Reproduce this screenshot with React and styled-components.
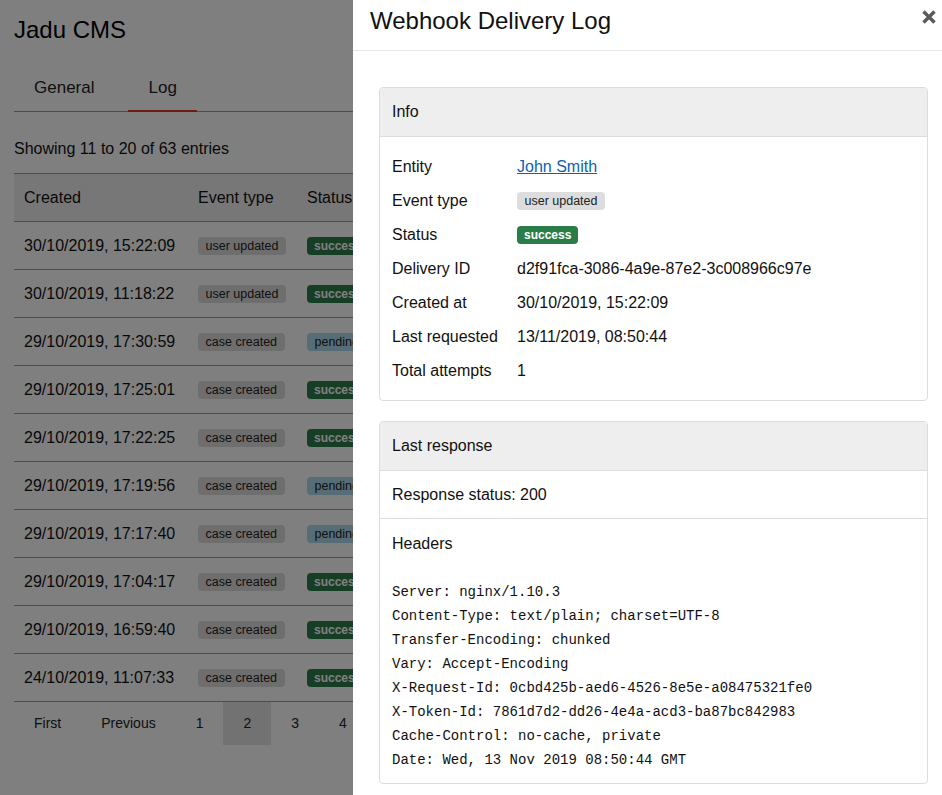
import React from "react";
import styled, { createGlobalStyle } from "styled-components";

const GlobalStyle = createGlobalStyle`
    body {
        margin: 0;
        background: #fff;
        font-family: "Liberation Sans", Arial, sans-serif;
        color: #111;
    }
`;

const rows = [
    { created: "30/10/2019, 15:22:09", event: "user updated", status: "success" },
    { created: "30/10/2019, 11:18:22", event: "user updated", status: "success" },
    { created: "29/10/2019, 17:30:59", event: "case created", status: "pending" },
    { created: "29/10/2019, 17:25:01", event: "case created", status: "success" },
    { created: "29/10/2019, 17:22:25", event: "case created", status: "success" },
    { created: "29/10/2019, 17:19:56", event: "case created", status: "pending" },
    { created: "29/10/2019, 17:17:40", event: "case created", status: "pending" },
    { created: "29/10/2019, 17:04:17", event: "case created", status: "success" },
    { created: "29/10/2019, 16:59:40", event: "case created", status: "success" },
    { created: "24/10/2019, 11:07:33", event: "case created", status: "success" },
];

const headers = `Server: nginx/1.10.3
Content-Type: text/plain; charset=UTF-8
Transfer-Encoding: chunked
Vary: Accept-Encoding
X-Request-Id: 0cbd425b-aed6-4526-8e5e-a08475321fe0
X-Token-Id: 7861d7d2-dd26-4e4a-acd3-ba87bc842983
Cache-Control: no-cache, private
Date: Wed, 13 Nov 2019 08:50:44 GMT`;

const pages = ["First", "Previous", "1", "2", "3", "4", "5", "6", "7", "Next", "Last"];

const App = () => {
    const info = [
        { label: "Entity", value: <LinkText href="#">John Smith</LinkText> },
        { label: "Event type", value: <Badge>user updated</Badge> },
        { label: "Status", value: <Badge $kind="success">success</Badge> },
        { label: "Delivery ID", value: "d2f91fca-3086-4a9e-87e2-3c008966c97e" },
        { label: "Created at", value: "30/10/2019, 15:22:09" },
        { label: "Last requested", value: "13/11/2019, 08:50:44" },
        { label: "Total attempts", value: "1" },
    ];

    return (
        <>
            <GlobalStyle />
            <Page>
                <Title>Jadu CMS</Title>
                <Tabs>
                    <Tab>General</Tab>
                    <Tab $active>Log</Tab>
                </Tabs>
                <Summary>Showing 11 to 20 of 63 entries</Summary>
                <Table>
                    <colgroup>
                        <col style={{ width: 174 }} />
                        <col style={{ width: 109 }} />
                        <col style={{ width: 120 }} />
                        <col style={{ width: 120 }} />
                        <col />
                    </colgroup>
                    <thead>
                        <tr>
                            <Th>Created</Th>
                            <Th>Event type</Th>
                            <Th>Status</Th>
                            <Th>Attempts</Th>
                            <Th />
                        </tr>
                    </thead>
                    <tbody>
                        {rows.map((r) => (
                            <tr key={r.created}>
                                <Td>{r.created}</Td>
                                <Td><Badge>{r.event}</Badge></Td>
                                <Td><Badge $kind={r.status}>{r.status}</Badge></Td>
                                <Td>1</Td>
                                <Td>View</Td>
                            </tr>
                        ))}
                    </tbody>
                </Table>
                <Pagination>
                    {pages.map((p) => (
                        <PageItem key={p} $active={p === "2"}>{p}</PageItem>
                    ))}
                </Pagination>
            </Page>
            <Backdrop />
            <Drawer>
                <DrawerHeader>
                    <DrawerTitle>Webhook Delivery Log</DrawerTitle>
                    <Close aria-label="Close">
                        <svg width="16" height="16" viewBox="0 0 16 16">
                            <path d="M2.5 2.5 L13.5 13.5 M13.5 2.5 L2.5 13.5" stroke="#5a5a5a" strokeWidth="3.4" />
                        </svg>
                    </Close>
                </DrawerHeader>
                <DrawerBody>
                    <Panel>
                        <PanelHeading>Info</PanelHeading>
                        <InfoGrid>
                            {info.map((i) => (
                                <React.Fragment key={i.label}>
                                    <InfoLabel>{i.label}</InfoLabel>
                                    <InfoValue>{i.value}</InfoValue>
                                </React.Fragment>
                            ))}
                        </InfoGrid>
                    </Panel>
                    <Panel>
                        <PanelHeading>Last response</PanelHeading>
                        <PanelSection>Response status: 200</PanelSection>
                        <PanelSection>
                            Headers
                            <Pre>{headers}</Pre>
                        </PanelSection>
                    </Panel>
                </DrawerBody>
            </Drawer>
        </>
    );
};

export default App;

const Page = styled.div`
    padding: 0 14px;
`;
const Title = styled.h1`
    margin: 0;
    padding-top: 16px;
    font-size: 24px;
    line-height: 28px;
    font-weight: 400;
    color: #000;
`;
const Tabs = styled.div`
    display: flex;
    gap: 14px;
    margin-top: 20px;
    border-bottom: 1px solid #9a9a9a;
`;
const Tab = styled.div`
    padding: 0 20px;
    height: 48px;
    line-height: 48px;
    font-size: 17px;
    color: #222;
    box-shadow: ${(p) => (p.$active ? "inset 0 -2px 0 #e0342c" : "none")};
    margin-bottom: -1px;
`;
const Summary = styled.p`
    margin: 27px 0 14px;
    font-size: 16px;
    line-height: 20px;
`;
const Table = styled.table`
    width: 100%;
    table-layout: fixed;
    border-collapse: collapse;
    font-size: 16px;
    border-top: 1px solid #9a9a9a;
    tr {
        border-bottom: 1px solid #9a9a9a;
    }
`;
const Th = styled.th`
    height: 47px;
    padding: 0 10px;
    text-align: left;
    font-weight: 400;
    background: #eee;
    white-space: nowrap;
`;
const Td = styled.td`
    height: 47px;
    padding: 0 10px;
    white-space: nowrap;
`;
const Badge = styled.span`
    display: inline-block;
    padding: ${(p) => (p.$kind === "success" ? "0 7px" : "0 7.5px")};
    height: 18px;
    line-height: 18px;
    border-radius: 4px;
    font-size: ${(p) => (p.$kind === "success" ? "12px" : "12.5px")};
    vertical-align: middle;
    font-weight: ${(p) => (p.$kind === "success" ? 700 : 400)};
    background: ${(p) =>
        p.$kind === "success" ? "#2b7d48" : p.$kind === "pending" ? "#aedbeb" : "#ddd"};
    color: ${(p) => (p.$kind === "success" ? "#fff" : "#222")};
`;
const Pagination = styled.div`
    display: flex;
`;
const PageItem = styled.div`
    padding: 0 20px;
    height: 43px;
    line-height: 43px;
    font-size: 14px;
    color: #222;
    background: ${(p) => (p.$active ? "#e4e4e4" : "transparent")};
`;
const Backdrop = styled.div`
    position: fixed;
    inset: 0;
    background: rgba(0, 0, 0, 0.5);
`;
const Drawer = styled.aside`
    position: fixed;
    top: 0;
    right: 0;
    bottom: 0;
    width: 589px;
    background: #fff;
    color: #111;
    overflow: hidden;
`;
const DrawerHeader = styled.header`
    display: flex;
    justify-content: space-between;
    align-items: flex-start;
    height: 51px;
    box-sizing: border-box;
    padding: 7px 5px 0 17px;
    border-bottom: 1px solid #e5e5e5;
`;
const DrawerTitle = styled.h2`
    margin: 0;
    font-size: 24px;
    line-height: 28px;
    font-weight: 400;
`;
const Close = styled.button`
    border: 0;
    background: none;
    padding: 0;
    margin-top: 2px;
    display: flex;
`;
const DrawerBody = styled.div`
    display: flex;
    flex-direction: column;
    gap: 20px;
    padding: 36px 14px 0 26px;
`;
const Panel = styled.section`
    border: 1px solid #ddd;
    border-radius: 4px;
    overflow: hidden;
`;
const PanelHeading = styled.div`
    background: #eee;
    height: 48px;
    line-height: 48px;
    padding: 0 12px;
    font-size: 16px;
    border-bottom: 1px solid #ddd;
`;
const InfoGrid = styled.div`
    display: grid;
    grid-template-columns: 125px 1fr;
    grid-auto-rows: 34px;
    align-items: center;
    padding: 13px 12px 12px;
    font-size: 16px;
`;
const InfoLabel = styled.div``;
const InfoValue = styled.div``;
const LinkText = styled.a`
    color: #0b62ad;
    text-decoration: underline;
`;
const PanelSection = styled.div`
    padding: 12px 12px 11px;
    font-size: 16px;
    line-height: 24px;
    & + & {
        border-top: 1px solid #ddd;
        padding-top: 13px;
    }
`;
const Pre = styled.pre`
    margin: 24px 0 0;
    font-family: "Liberation Mono", "Courier New", monospace;
    font-size: 14px;
    line-height: 24px;
    color: #111;
`;
